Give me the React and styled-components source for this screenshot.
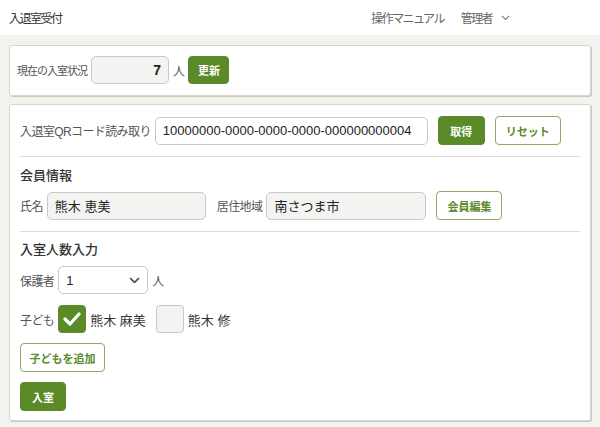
import styled, { createGlobalStyle } from 'styled-components';

const GlobalStyle = createGlobalStyle`
  body {
    margin: 0;
    background: #f2f2ef;
    font-family: 'Liberation Sans', 'Noto Sans CJK JP', sans-serif;
    color: #333;
  }
`;

const green = '#5b8a28';

const Header = styled.header`
  height: 35px;
  background: #fff;
  display: flex;
  align-items: center;
  justify-content: space-between;
  padding: 0 90px 0 9px;
`;

const Title = styled.div`
  font-size: 12px;
  letter-spacing: -1.5px;
  color: #333;
`;

const Nav = styled.nav`
  display: flex;
  align-items: center;
  gap: 17px;
  font-size: 12px;
  letter-spacing: -1.6px;
  color: #666;
`;

const NavItem = styled.span`
  display: flex;
  align-items: center;
  gap: 9px;
`;

const Main = styled.main`
  padding: 10px 9px 5px;
  display: flex;
  flex-direction: column;
  gap: 8px;
`;

const Card = styled.section`
  background: #fff;
  border: 1px solid #d6d6d0;
  border-radius: 3px;
  box-shadow: 1px 1px 0 #c8ccbf;
  padding: ${(p) => p.$pad};
  display: flex;
  flex-direction: column;
`;

const Row = styled.div`
  display: flex;
  align-items: center;
  gap: 4px;
  margin-top: ${(p) => p.$mt || '0'};
`;

const Group = styled.div`
  display: flex;
  align-items: center;
  gap: 4px;
  margin-left: ${(p) => p.$ml || '0'};
`;

const Label = styled.span`
  font-size: ${(p) => (p.$tight ? '11px' : '12px')};
  letter-spacing: ${(p) => (p.$tight ? '-1px' : '-0.6px')};
  color: #555;
  white-space: nowrap;
`;

const Heading = styled.h2`
  margin: ${(p) => p.$m};
  font-size: 13px;
  font-weight: 500;
  line-height: 18px;
  color: #333;
`;

const Field = styled.div`
  box-sizing: border-box;
  width: ${(p) => p.$w};
  height: 28px;
  border: 1px solid #c9c9c4;
  border-radius: 5px;
  background: ${(p) => (p.$readonly ? '#f3f3f1' : '#fff')};
  display: flex;
  align-items: center;
  justify-content: ${(p) => (p.$right ? 'flex-end' : 'space-between')};
  padding: 0 7px;
  font-size: ${(p) => (p.$right ? '14px' : '13px')};
  font-weight: ${(p) => (p.$right ? 'bold' : 'normal')};
  color: #222;
  white-space: nowrap;
`;

const Button = styled.button`
  box-sizing: border-box;
  height: 29px;
  width: ${(p) => p.$w};
  border-radius: 4px;
  border: 1px solid ${(p) => (p.$outline ? '#8aab68' : green)};
  background: ${(p) => (p.$outline ? '#fff' : green)};
  color: ${(p) => (p.$outline ? green : '#fff')};
  font-family: inherit;
  font-size: 11px;
  font-weight: bold;
  padding: 0;
  margin-left: ${(p) => p.$ml || '0'};
  cursor: pointer;
`;

const Divider = styled.hr`
  border: none;
  border-top: 1px solid #dcdcd8;
  margin: ${(p) => p.$m};
`;

const CheckBox = styled.span`
  box-sizing: border-box;
  width: 28px;
  height: 28px;
  border-radius: 4px;
  border: 1px solid ${(p) => (p.$checked ? green : '#c9c9c4')};
  background: ${(p) => (p.$checked ? green : '#f3f3f1')};
  display: flex;
  align-items: center;
  justify-content: center;
`;

const Name = styled.span`
  font-size: 13px;
  color: #333;
  white-space: nowrap;
`;

const Chevron = ({ size = 9, color = '#777', width = 1.2 }) => (
  <svg width={size} height={size * 0.6} viewBox="0 0 10 6">
    <polyline points="1,1 5,5 9,1" fill="none" stroke={color} strokeWidth={width} />
  </svg>
);

export default function App() {
  return (
    <>
      <GlobalStyle />
      <Header>
        <Title>入退室受付</Title>
        <Nav>
          <NavItem>操作マニュアル</NavItem>
          <NavItem>
            管理者 <Chevron />
          </NavItem>
        </Nav>
      </Header>
      <Main>
        <Card $pad="10px 8px 11px 7px">
          <Row>
            <Label $tight>現在の入室状況</Label>
            <Field $w="78px" $readonly $right>7</Field>
            <Label>人</Label>
            <Button $w="41px" style={{ height: '28px' }}>更新</Button>
          </Row>
        </Card>
        <Card $pad="11px 10px 9px">
          <Row>
            <Label>入退室QRコード読み取り</Label>
            <Field $w="273px">10000000-0000-0000-0000-000000000004</Field>
            <Button $w="47px" $ml="6px">取得</Button>
            <Button $w="66px" $ml="6px" $outline>リセット</Button>
          </Row>
          <Divider $m="11px 0 0" />
          <Heading $m="10px 0 6px">会員情報</Heading>
          <Row>
            <Label>氏名</Label>
            <Field $w="159px" $readonly>熊木 恵美</Field>
            <Group $ml="7px">
              <Label>居住地域</Label>
              <Field $w="160px" $readonly>南さつま市</Field>
            </Group>
            <Button $w="66px" $ml="6px" $outline>会員編集</Button>
          </Row>
          <Divider $m="11px 0 0" />
          <Heading $m="9px 0 7px">入室人数入力</Heading>
          <Row>
            <Label>保護者</Label>
            <Field $w="90px">
              1 <Chevron size={11} color="#555" width={1.6} />
            </Field>
            <Label>人</Label>
          </Row>
          <Row $mt="11px">
            <Label>子ども</Label>
            <CheckBox $checked>
              <svg width="18" height="14" viewBox="0 0 18 14">
                <polyline points="2,7 7,12 16,2" fill="none" stroke="#fff" strokeWidth="3.2" strokeLinecap="round" strokeLinejoin="round" />
              </svg>
            </CheckBox>
            <Name>熊木 麻美</Name>
            <Group $ml="6px">
              <CheckBox />
              <Name>熊木 修</Name>
            </Group>
          </Row>
          <Row $mt="10px">
            <Button $w="85px" $outline>子どもを追加</Button>
          </Row>
          <Row $mt="10px">
            <Button $w="46px">入室</Button>
          </Row>
        </Card>
      </Main>
    </>
  );
}
